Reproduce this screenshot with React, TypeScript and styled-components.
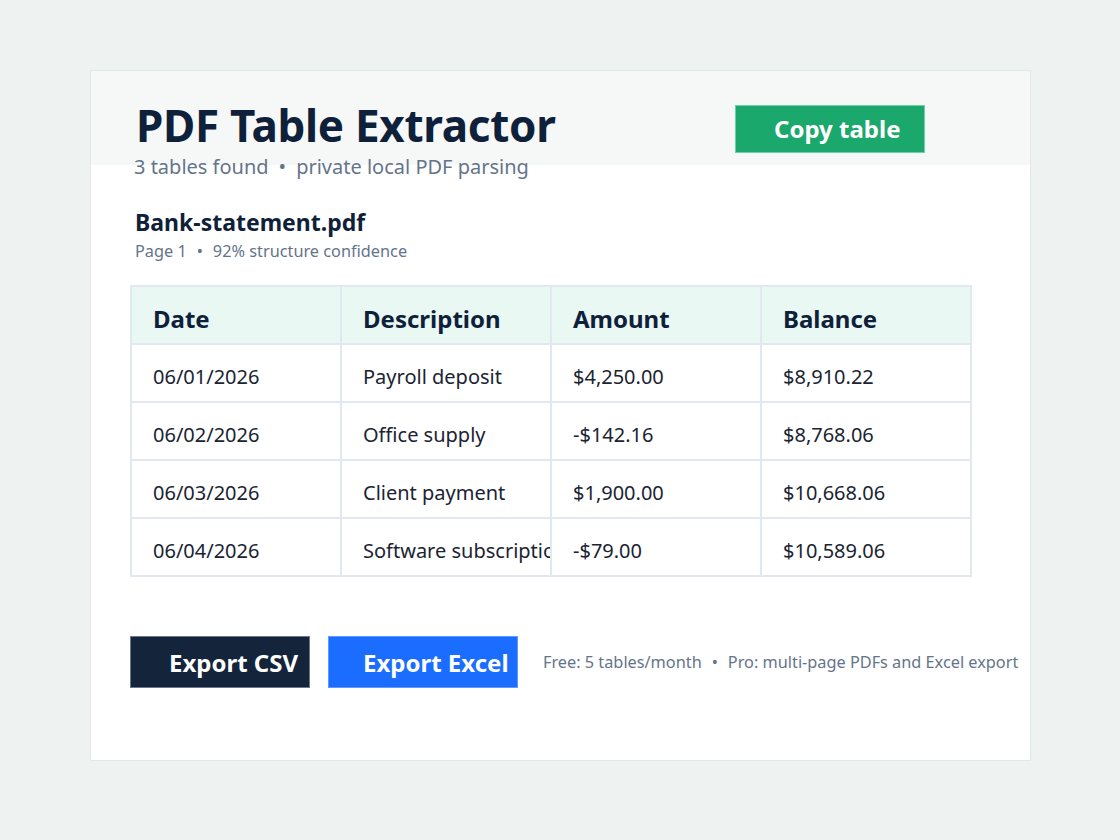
import React from 'react';
import styled, { createGlobalStyle } from 'styled-components';

const GlobalStyle = createGlobalStyle`
  html, body {
    margin: 0;
    padding: 0;
    background: #eef3f1;
    font-family: "Noto Sans", "Open Sans", sans-serif;
  }
`;

const Page = styled.div`
  width: 1120px;
  height: 840px;
  padding: 70px 0 0 90px;
  box-sizing: border-box;
`;

const Card = styled.div`
  width: 941px;
  height: 691px;
  box-sizing: border-box;
  border: 1px solid #e1e8ea;
  background:
    linear-gradient(#f6f8f8, #f6f8f8) top left / 100% 94px no-repeat,
    #ffffff;
  padding: 0 105px 0 39px;
  display: flex;
  flex-direction: column;
`;

const HeaderBar = styled.div`
  display: flex;
  justify-content: space-between;
  align-items: center;
  height: 102px;
  padding: 0 0 0 6px;
  box-sizing: border-box;
`;

const Title = styled.h1`
  margin: 6px 0 0;
  font-size: 44px;
  font-weight: 700;
  color: #0f213a;
  letter-spacing: -0.3px;
  white-space: nowrap;
`;

const CopyButton = styled.button`
  flex-shrink: 0;
  width: 190px;
  height: 48px;
  margin-top: 13px;
  background: #1ba86c;
  border: 1px solid #6dd2a6;
  color: #fff;
  font-family: inherit;
  font-size: 24px;
  font-weight: 700;
  padding: 0 0 0 38px;
  text-align: left;
  white-space: nowrap;
`;

const Subtitle = styled.div`
  margin-top: -20px;
  padding-left: 4px;
  font-size: 20px;
  color: #64748b;
`;

const Dot = styled.span`
  margin: 0 10px;
`;

const FileName = styled.div`
  margin-top: 26px;
  padding-left: 5px;
  font-size: 23px;
  font-weight: 700;
  color: #0f213a;
`;

const Meta = styled.div`
  margin-top: 2px;
  padding-left: 5px;
  font-size: 16.3px;
  color: #64748b;
`;

const Table = styled.table`
  margin-top: 23px;
  width: 842px;
  table-layout: fixed;
  border-collapse: collapse;
  border: 2px solid #e2e8ef;
`;

const Cell = styled.td<{ $head?: boolean }>`
  height: 58px;
  padding: 7px 0 0 21px;
  box-sizing: border-box;
  border: 2px solid #e2e8ef;
  white-space: nowrap;
  overflow: hidden;
  text-overflow: clip;
  font-size: ${(p) => (p.$head ? '24px' : '20px')};
  font-weight: ${(p) => (p.$head ? 700 : 400)};
  color: ${(p) => (p.$head ? '#0f213a' : '#1a2433')};
  background: ${(p) => (p.$head ? '#e9f8f3' : '#ffffff')};
  text-align: left;
`;

const Footer = styled.div`
  margin-top: 59px;
  display: flex;
  align-items: center;
  gap: 18px;
`;

const ActionButton = styled.button<{ $bg: string; $edge: string; $w: number; $pad: number }>`
  flex-shrink: 0;
  width: ${(p) => p.$w}px;
  height: 52px;
  background: ${(p) => p.$bg};
  border: 1px solid ${(p) => p.$edge};
  color: #fff;
  font-family: inherit;
  font-size: 24px;
  font-weight: 700;
  padding: 0 0 0 ${(p) => p.$pad}px;
  text-align: left;
  white-space: nowrap;
`;

const Note = styled.div`
  margin-left: 7px;
  font-size: 16.3px;
  color: #64748b;
  white-space: nowrap;
`;

const headers = ['Date', 'Description', 'Amount', 'Balance'];

const rows = [
  ['06/01/2026', 'Payroll deposit', '$4,250.00', '$8,910.22'],
  ['06/02/2026', 'Office supply', '-$142.16', '$8,768.06'],
  ['06/03/2026', 'Client payment', '$1,900.00', '$10,668.06'],
  ['06/04/2026', 'Software subscription', '-$79.00', '$10,589.06'],
];

export default function App() {
  return (
    <>
      <GlobalStyle />
      <Page>
        <Card>
          <HeaderBar>
            <Title>PDF Table Extractor</Title>
            <CopyButton>Copy table</CopyButton>
          </HeaderBar>
          <Subtitle>
            3 tables found<Dot>•</Dot>private local PDF parsing
          </Subtitle>

          <FileName>Bank-statement.pdf</FileName>
          <Meta>
            Page 1<Dot>•</Dot>92% structure confidence
          </Meta>

          <Table>
            <colgroup>
              {headers.map((h) => (
                <col key={h} style={{ width: '210px' }} />
              ))}
            </colgroup>
            <thead>
              <tr>
                {headers.map((h) => (
                  <Cell as="th" key={h} $head>
                    {h}
                  </Cell>
                ))}
              </tr>
            </thead>
            <tbody>
              {rows.map((r) => (
                <tr key={r[0]}>
                  {r.map((c, i) => (
                    <Cell key={i}>{c}</Cell>
                  ))}
                </tr>
              ))}
            </tbody>
          </Table>

          <Footer>
            <ActionButton $bg="#13243b" $edge="#6b7889" $w={180} $pad={38}>
              Export CSV
            </ActionButton>
            <ActionButton $bg="#1a6dff" $edge="#5f9bff" $w={190} $pad={34}>
              Export Excel
            </ActionButton>
            <Note>
              Free: 5 tables/month<Dot>•</Dot>Pro: multi-page PDFs and Excel export
            </Note>
          </Footer>
        </Card>
      </Page>
    </>
  );
}
